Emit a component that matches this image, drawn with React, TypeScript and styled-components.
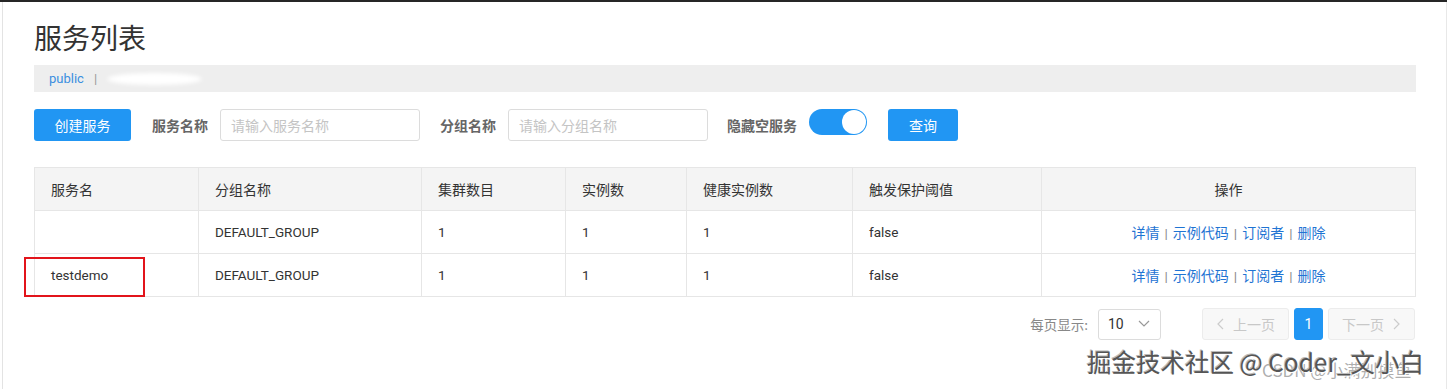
import React from "react";
import styled, { createGlobalStyle } from "styled-components";

const GlobalStyle = createGlobalStyle`
    html, body {
        margin: 0;
        padding: 0;
        background: #fff;
    }
    body {
        font-family: Roboto, "Noto Sans CJK SC", sans-serif;
        color: #333;
    }
`;

const Page = styled.div`
    position: relative;
    height: 389px;
    border-top: 2px solid #262626;
    box-sizing: border-box;
    overflow: hidden;
`;

const Frame = styled.div`
    margin-left: 2px;
    height: 100%;
    border-left: 1px solid #e3e3e3;
    border-right: 1px solid #e8e8e8;
    padding: 18px 30px 0 31px;
    box-sizing: border-box;
`;

const Title = styled.h1`
    margin: 0;
    height: 40px;
    line-height: 40px;
    font-size: 28px;
    font-weight: 400;
    color: #333;
`;

const Crumbs = styled.div`
    margin-top: 5px;
    height: 27px;
    display: flex;
    align-items: center;
    gap: 10px;
    padding-left: 15px;
    background: #eeeeee;
    font-size: 13px;
`;

const CrumbLink = styled.span`
    color: #3b8fe0;
`;

const CrumbSep = styled.span`
    color: #999;
`;

const Smudge = styled.span`
    width: 95px;
    height: 12px;
    border-radius: 50%;
    background: #fff;
    filter: blur(2px);
`;

const Toolbar = styled.div`
    margin-top: 17px;
    display: flex;
    align-items: center;
    height: 32px;
`;

const Button = styled.button<{ $w: number; $gap?: number }>`
    width: ${(p) => p.$w}px;
    height: 32px;
    margin-left: ${(p) => p.$gap ?? 0}px;
    border: none;
    border-radius: 3px;
    background: #2196f3;
    color: #fff;
    font-family: "Noto Sans CJK SC", sans-serif;
    font-size: 14px;
    padding: 0;
`;

const Label = styled.span<{ $gap: number }>`
    margin-left: ${(p) => p.$gap}px;
    margin-right: 12px;
    font-size: 14px;
    font-weight: 700;
    color: #666;
    font-family: "Noto Sans CJK SC", sans-serif;
`;

const Input = styled.input`
    width: 200px;
    height: 32px;
    box-sizing: border-box;
    border: 1px solid #dcdcdc;
    border-radius: 3px;
    padding: 0 10px;
    font-size: 14px;
    font-family: "Noto Sans CJK SC", sans-serif;
    outline: none;
    &::placeholder {
        color: #c4c4c4;
    }
`;

const Switch = styled.span`
    display: inline-flex;
    align-items: center;
    justify-content: flex-end;
    width: 58px;
    height: 26px;
    margin-top: -7px;
    box-sizing: border-box;
    border-radius: 13px;
    background: #2196f3;
    padding: 0 1px;
`;

const Knob = styled.span`
    width: 24px;
    height: 24px;
    border-radius: 50%;
    background: #fff;
`;

const Table = styled.table`
    margin-top: 26px;
    width: 1381px;
    border-collapse: collapse;
    table-layout: fixed;
    font-size: 13.5px;
`;

const Th = styled.th<{ $center?: boolean }>`
    height: 42px;
    padding: 0 16px;
    background: #f4f4f4;
    border: 1px solid #e6e6e6;
    text-align: ${(p) => (p.$center ? "center" : "left")};
    font-weight: 400;
    font-size: 14px;
    color: #333;
    font-family: "Noto Sans CJK SC", sans-serif;
`;

const Td = styled.td<{ $center?: boolean }>`
    position: relative;
    height: 42px;
    padding: 0 16px;
    border: 1px solid #e6e6e6;
    text-align: ${(p) => (p.$center ? "center" : "left")};
    color: #333;
`;

const Mark = styled.span`
    position: absolute;
    left: -11px;
    top: 3px;
    width: 121px;
    height: 40px;
    border: 2px solid #e2141b;
    box-sizing: border-box;
`;

const Action = styled.a`
    color: #1f74d3;
    font-family: "Noto Sans CJK SC", sans-serif;
    font-size: 14px;
    text-decoration: none;
`;

const ActionSep = styled.span`
    color: #888;
    margin: 0 5px;
`;

const Pager = styled.div`
    margin-top: 11px;
    display: flex;
    justify-content: flex-end;
    align-items: center;
    width: 1381px;
    font-family: "Noto Sans CJK SC", sans-serif;
`;

const PageLabel = styled.span`
    font-size: 13.5px;
    color: #888;
    margin-right: 10px;
`;

const Select = styled.div`
    display: flex;
    align-items: center;
    justify-content: space-between;
    width: 63px;
    height: 31px;
    box-sizing: border-box;
    border: 1px solid #dcdcdc;
    border-radius: 3px;
    padding: 0 10px 0 9px;
    font-family: Roboto, sans-serif;
    font-size: 14px;
    color: #333;
    margin-right: 36px;
`;

const PageBtn = styled.div<{ $active?: boolean; $w: number }>`
    display: flex;
    align-items: center;
    justify-content: center;
    gap: 8px;
    width: ${(p) => p.$w}px;
    height: 32px;
    box-sizing: border-box;
    margin-left: 5px;
    border-radius: 3px;
    border: 1px solid ${(p) => (p.$active ? "#2196f3" : "#ececec")};
    background: ${(p) => (p.$active ? "#2196f3" : "#f8f8f8")};
    color: ${(p) => (p.$active ? "#fff" : "#c8c8c8")};
    font-size: 14px;
    font-family: ${(p) => (p.$active ? "Roboto, sans-serif" : "'Noto Sans CJK SC', sans-serif")};
`;

const Watermark = styled.div`
    position: absolute;
    left: 1087px;
    top: 342px;
    font-family: "Noto Sans CJK SC", sans-serif;
    font-size: 24.5px;
    color: #555;
    white-space: nowrap;
    text-shadow: 1px 1px 0 #fff, -1px -1px 0 #bbb;
`;

const SubMark = styled.div`
    position: absolute;
    left: 1262px;
    top: 355px;
    font-family: "Noto Sans CJK SC", sans-serif;
    font-size: 17px;
    color: rgba(120, 120, 120, 0.6);
    white-space: nowrap;
`;

const Chevron = ({ dir }: { dir: "l" | "r" | "d" }) => {
    const d = dir === "l" ? "M7 1 L2 6 L7 11" : dir === "r" ? "M2 1 L7 6 L2 11" : "M1 3 L6 8 L11 3";
    const w = dir === "d" ? 12 : 9;
    return (
        <svg width={w} height={12} viewBox={`0 0 ${w} 12`} fill="none" stroke={dir === "d" ? "#999" : "#ccc"} strokeWidth="1.2">
            <path d={d} />
        </svg>
    );
};

const rows = [
    { name: "", mark: false },
    { name: "testdemo", mark: true },
];

const App: React.FC = () => {
    return (
        <Page>
            <GlobalStyle />
            <Frame>
                <Title>服务列表</Title>
                <Crumbs>
                    <CrumbLink>public</CrumbLink>
                    <CrumbSep>|</CrumbSep>
                    <Smudge />
                </Crumbs>
                <Toolbar>
                    <Button $w={97}>创建服务</Button>
                    <Label $gap={21}>服务名称</Label>
                    <Input placeholder="请输入服务名称" />
                    <Label $gap={20}>分组名称</Label>
                    <Input placeholder="请输入分组名称" />
                    <Label $gap={19}>隐藏空服务</Label>
                    <Switch>
                        <Knob />
                    </Switch>
                    <Button $w={70} $gap={21}>查询</Button>
                </Toolbar>
                <Table>
                    <colgroup>
                        <col style={{ width: 164 }} />
                        <col style={{ width: 223 }} />
                        <col style={{ width: 144 }} />
                        <col style={{ width: 121 }} />
                        <col style={{ width: 166 }} />
                        <col style={{ width: 189 }} />
                        <col style={{ width: 374 }} />
                    </colgroup>
                    <thead>
                        <tr>
                            <Th>服务名</Th>
                            <Th>分组名称</Th>
                            <Th>集群数目</Th>
                            <Th>实例数</Th>
                            <Th>健康实例数</Th>
                            <Th>触发保护阈值</Th>
                            <Th $center>操作</Th>
                        </tr>
                    </thead>
                    <tbody>
                        {rows.map((r, i) => (
                            <tr key={i}>
                                <Td>
                                    {r.name}
                                    {r.mark && <Mark />}
                                </Td>
                                <Td>DEFAULT_GROUP</Td>
                                <Td>1</Td>
                                <Td>1</Td>
                                <Td>1</Td>
                                <Td>false</Td>
                                <Td $center>
                                    <Action>详情</Action>
                                    <ActionSep>|</ActionSep>
                                    <Action>示例代码</Action>
                                    <ActionSep>|</ActionSep>
                                    <Action>订阅者</Action>
                                    <ActionSep>|</ActionSep>
                                    <Action>删除</Action>
                                </Td>
                            </tr>
                        ))}
                    </tbody>
                </Table>
                <Pager>
                    <PageLabel>每页显示:</PageLabel>
                    <Select>
                        10
                        <Chevron dir="d" />
                    </Select>
                    <PageBtn $w={87}>
                        <Chevron dir="l" />
                        上一页
                    </PageBtn>
                    <PageBtn $w={29} $active>1</PageBtn>
                    <PageBtn $w={87}>
                        下一页
                        <Chevron dir="r" />
                    </PageBtn>
                </Pager>
            </Frame>
            <SubMark>CSDN @小满别摸鱼</SubMark>
            <Watermark>掘金技术社区 @ Coder_文小白</Watermark>
        </Page>
    );
};

export default App;
